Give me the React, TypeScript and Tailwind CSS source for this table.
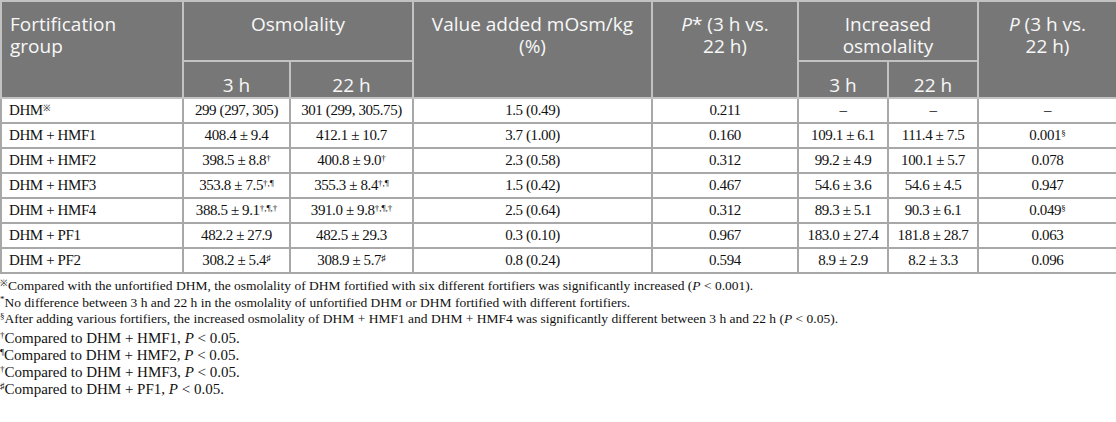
import React from 'react'

const rows = [
  { group: 'DHM', gSup: '※', a: '299 (297, 305)', aSup: '', b: '301 (299, 305.75)', bSup: '', value: '1.5 (0.49)', p: '0.211', i3: '–', i22: '–', p2: '–', p2Sup: '' },
  { group: 'DHM + HMF1', gSup: '', a: '408.4 ± 9.4', aSup: '', b: '412.1 ± 10.7', bSup: '', value: '3.7 (1.00)', p: '0.160', i3: '109.1 ± 6.1', i22: '111.4 ± 7.5', p2: '0.001', p2Sup: '§' },
  { group: 'DHM + HMF2', gSup: '', a: '398.5 ± 8.8', aSup: '†', b: '400.8 ± 9.0', bSup: '†', value: '2.3 (0.58)', p: '0.312', i3: '99.2 ± 4.9', i22: '100.1 ± 5.7', p2: '0.078', p2Sup: '' },
  { group: 'DHM + HMF3', gSup: '', a: '353.8 ± 7.5', aSup: '†,¶', b: '355.3 ± 8.4', bSup: '†,¶', value: '1.5 (0.42)', p: '0.467', i3: '54.6 ± 3.6', i22: '54.6 ± 4.5', p2: '0.947', p2Sup: '' },
  { group: 'DHM + HMF4', gSup: '', a: '388.5 ± 9.1', aSup: '†,¶,†', b: '391.0 ± 9.8', bSup: '†,¶,†', value: '2.5 (0.64)', p: '0.312', i3: '89.3 ± 5.1', i22: '90.3 ± 6.1', p2: '0.049', p2Sup: '§' },
  { group: 'DHM + PF1', gSup: '', a: '482.2 ± 27.9', aSup: '', b: '482.5 ± 29.3', bSup: '', value: '0.3 (0.10)', p: '0.967', i3: '183.0 ± 27.4', i22: '181.8 ± 28.7', p2: '0.063', p2Sup: '' },
  { group: 'DHM + PF2', gSup: '', a: '308.2 ± 5.4', aSup: '♯', b: '308.9 ± 5.7', bSup: '♯', value: '0.8 (0.24)', p: '0.594', i3: '8.9 ± 2.9', i22: '8.2 ± 3.3', p2: '0.096', p2Sup: '' },
]

const Sup = ({ children }: { children: React.ReactNode }) => (
  <sup className="text-[9px] tracking-normal">{children}</sup>
)

const App: React.FC = () => {
  const th = 'border-2 border-[#c2c2c2] bg-[#777777] text-[#f7f7f7] font-normal align-top'
  const td = 'border-2 border-[#a8a8a8] h-[25px] text-center align-middle p-0 whitespace-nowrap'

  return (
    <div className="w-[1116px] h-[422px] bg-white overflow-hidden">
      <table
        className="w-[1116px] table-fixed border-collapse"
        style={{ fontFamily: '"Liberation Serif", serif' }}
      >
        <colgroup>
          <col className="w-[182px]" />
          <col className="w-[107px]" />
          <col className="w-[123px]" />
          <col className="w-[239px]" />
          <col className="w-[146px]" />
          <col className="w-[90px]" />
          <col className="w-[90px]" />
          <col className="w-[139px]" />
        </colgroup>
        <thead className="font-['Open_Sans',sans-serif] text-[19px] leading-[22px]">
          <tr className="h-[60px]">
            <th rowSpan={2} className={`${th} text-left pl-[8px] pt-[11px]`}>
              Fortification
              <br />
              group
            </th>
            <th colSpan={2} className={`${th} text-center pt-[11px]`}>
              Osmolality
            </th>
            <th rowSpan={2} className={`${th} text-center pt-[11px]`}>
              Value added mOsm/kg
              <br />
              (%)
            </th>
            <th rowSpan={2} className={`${th} text-center pt-[11px]`}>
              <i>P</i>* (3 h vs.
              <br />
              22 h)
            </th>
            <th colSpan={2} className={`${th} text-center pt-[11px]`}>
              Increased
              <br />
              osmolality
            </th>
            <th rowSpan={2} className={`${th} text-center pt-[11px]`}>
              <i>P</i> (3 h vs.
              <br />
              22 h)
            </th>
          </tr>
          <tr className="h-[37px]">
            <th className={`${th} text-center pt-[12px]`}>3 h</th>
            <th className={`${th} text-center pt-[12px]`}>22 h</th>
            <th className={`${th} text-center pt-[12px]`}>3 h</th>
            <th className={`${th} text-center pt-[12px]`}>22 h</th>
          </tr>
        </thead>
        <tbody className="text-[15px] tracking-[-0.4px] text-[#111]">
          {rows.map((r) => (
            <tr key={r.group}>
              <td className={`${td} text-left pl-[7px]`}>
                {r.group}
                {r.gSup && <Sup>{r.gSup}</Sup>}
              </td>
              <td className={td}>
                {r.a}
                {r.aSup && <Sup>{r.aSup}</Sup>}
              </td>
              <td className={td}>
                {r.b}
                {r.bSup && <Sup>{r.bSup}</Sup>}
              </td>
              <td className={td}>{r.value}</td>
              <td className={td}>{r.p}</td>
              <td className={td}>{r.i3}</td>
              <td className={td}>{r.i22}</td>
              <td className={td}>
                {r.p2}
                {r.p2Sup && <Sup>{r.p2Sup}</Sup>}
              </td>
            </tr>
          ))}
        </tbody>
      </table>

      {/* 脚注 */}
      <div className="pt-[4px] text-[#111] font-['Liberation_Serif',serif]">
        <div className="text-[13.5px] leading-[16.5px]">
          <p>
            <Sup>※</Sup>Compared with the unfortified DHM, the osmolality of DHM fortified with six different fortifiers was significantly increased (<i>P</i> &lt; 0.001).
          </p>
          <p>
            <Sup>*</Sup>No difference between 3 h and 22 h in the osmolality of unfortified DHM or DHM fortified with different fortifiers.
          </p>
          <p>
            <Sup>§</Sup>After adding various fortifiers, the increased osmolality of DHM + HMF1 and DHM + HMF4 was significantly different between 3 h and 22 h (<i>P</i> &lt; 0.05).
          </p>
        </div>
        <div className="mt-[2px] text-[15px] leading-[17px]">
          <p>
            <Sup>†</Sup>Compared to DHM + HMF1, <i>P</i> &lt; 0.05.
          </p>
          <p>
            <Sup>¶</Sup>Compared to DHM + HMF2, <i>P</i> &lt; 0.05.
          </p>
          <p>
            <Sup>†</Sup>Compared to DHM + HMF3, <i>P</i> &lt; 0.05.
          </p>
          <p>
            <Sup>♯</Sup>Compared to DHM + PF1, <i>P</i> &lt; 0.05.
          </p>
        </div>
      </div>
    </div>
  )
}

export default App
